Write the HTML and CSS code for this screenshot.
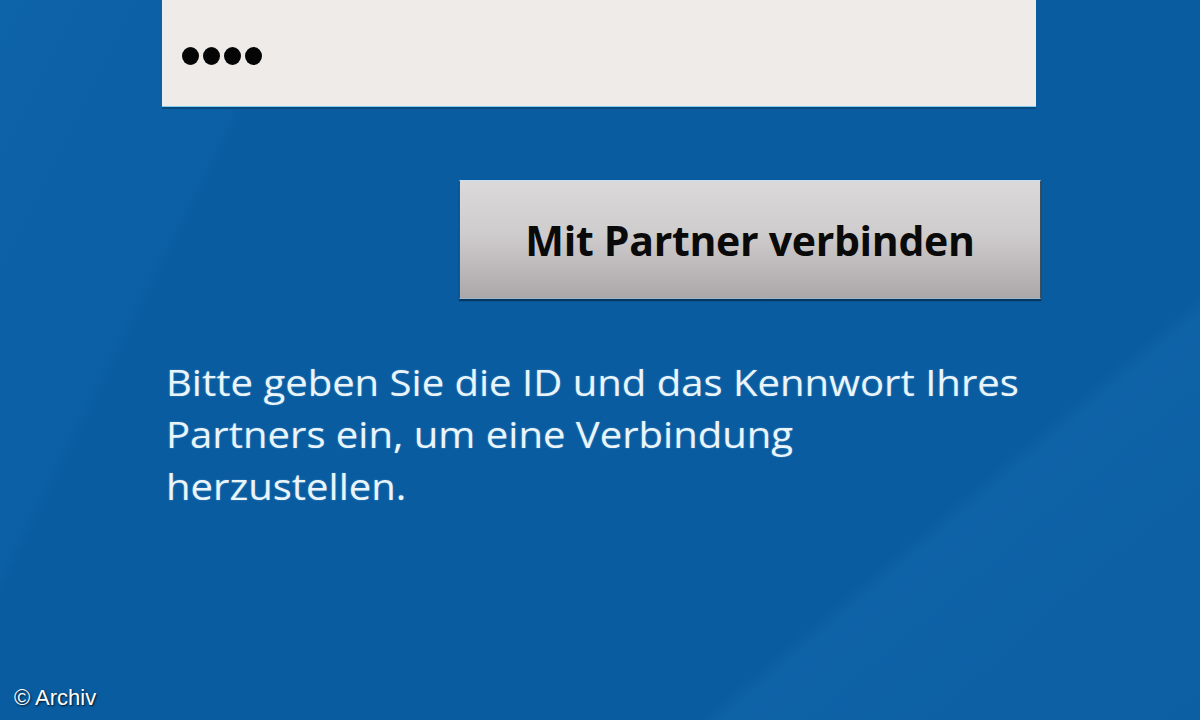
FILE: index.html
```html
<!DOCTYPE html>
<html lang="de">
<head>
<meta charset="utf-8">
<title>Mit Partner verbinden</title>
<link rel="stylesheet" href="styles.css">
</head>
<body>
<div class="screen">
  <div class="form">
    <div class="field">
      <span class="dot"></span><span class="dot"></span><span class="dot"></span><span class="dot"></span>
    </div>
    <div class="actions">
      <button class="connect" type="button">Mit Partner verbinden</button>
    </div>
    <p class="hint">Bitte geben Sie die ID und das Kennwort Ihres Partners ein, um eine Verbindung herzustellen.</p>
  </div>
  <div class="credit">© Archiv</div>
</div>
</body>
</html>
```

FILE: styles.css
```css
html, body {
  margin: 0;
  padding: 0;
}

body {
  width: 1200px;
  height: 720px;
  overflow: hidden;
}

.screen {
  position: relative;
  width: 1200px;
  height: 720px;
  background-color: #095ca0;
  background-image:
    linear-gradient(116.6deg, rgba(40, 140, 220, 0.14) 0, rgba(40, 140, 220, 0.08) 255px, rgba(0, 0, 0, 0) 268px),
    linear-gradient(139.7deg, rgba(0, 0, 0, 0) 1000px, rgba(60, 150, 220, 0.10) 1016px, rgba(60, 150, 220, 0.05) 1325px);
  font-family: "Open Sans", "Noto Sans", sans-serif;
}

.form {
  display: flex;
  flex-direction: column;
  padding-left: 162px;
}

.field {
  width: 874px;
  height: 107px;
  background: #eeebe8;
  border-bottom: 1px solid #7fd0f0;
  box-shadow: 0 2px 0 #0a4a7e;
  display: flex;
  align-items: center;
  gap: 4px;
  padding-left: 20px;
  box-sizing: border-box;
  padding-top: 6px;
}

.dot {
  width: 17px;
  height: 18px;
  border-radius: 50%;
  background: #050505;
}

.actions {
  margin-top: 73px;
  padding-left: 297px;
  display: flex;
}

.connect {
  width: 582px;
  height: 119px;
  margin: 0;
  padding: 0;
  border: 1px solid #3a4f62;
  border-top-color: #c9dff0;
  border-bottom-color: #9fb7c9;
  background: linear-gradient(180deg, #dbd9da 0%, #cfcccd 45%, #aca8a9 100%);
  box-shadow: 0 2px 1px rgba(5, 40, 70, 0.7);
  font-family: "Open Sans", "Noto Sans", sans-serif;
  font-weight: 700;
  font-size: 41px;
  color: #0a0a0a;
  letter-spacing: -0.3px;
}

.hint {
  margin: 57px 0 0 4px;
  width: 793px;
  font-size: 36.5px;
  line-height: 52px;
  color: #eaf5fb;
  text-shadow: 0 0 2px rgba(180, 230, 255, 0.35);
  transform: scaleX(1.097);
  transform-origin: 0 0;
}

.credit {
  position: absolute;
  left: 14px;
  top: 685px;
  font-family: "Liberation Sans", Arial, sans-serif;
  font-size: 22px;
  color: #ffffff;
  text-shadow: 1px 1px 2px rgba(0, 0, 0, 0.8);
}
```
